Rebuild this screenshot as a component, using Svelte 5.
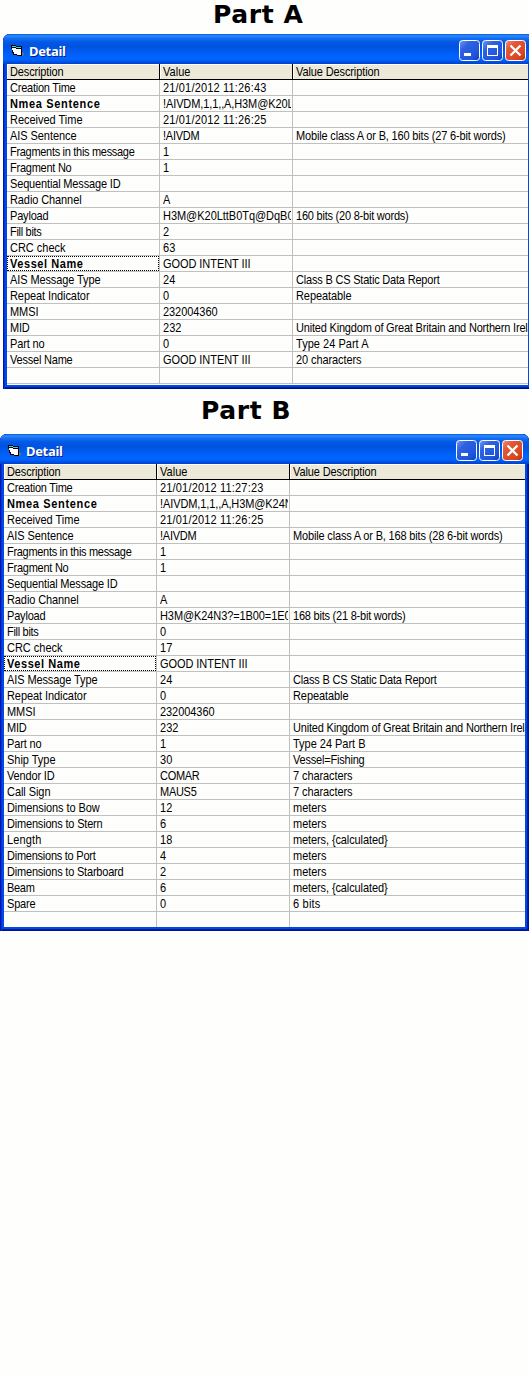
<script>
  const partA = [
    ['Creation Time', '21/01/2012 11:26:43', '', 65, 103],
    ['Nmea Sentence', '!AIVDM,1,1,,A,H3M@K20L', '', 90, 130],
    ['Received Time', '21/01/2012 11:26:25', '', 72, 103],
    ['AIS Sentence', '!AIVDM', 'Mobile class A or B, 160 bits (27 6-bit words)', 66, 36, 209],
    ['Fragments in this message', '1', '', 124, 6],
    ['Fragment No', '1', '', 61, 6],
    ['Sequential Message ID', '', '', 110],
    ['Radio Channel', 'A', '', 71, 8],
    ['Payload', 'H3M@K20LttB0Tq@DqB0', '160 bits (20 8-bit words)', 38, 130, 112],
    ['Fill bits', '2', '', 31, 6],
    ['CRC check', '63', '', 55, 12],
    ['Vessel Name', 'GOOD INTENT III', '', 73, 87],
    ['AIS Message Type', '24', 'Class B CS Static Data Report', 90, 12, 143],
    ['Repeat Indicator', '0', 'Repeatable', 79, 6, 55],
    ['MMSI', '232004360', '', 28, 54],
    ['MID', '232', 'United Kingdom of Great Britain and Northern Irela', 19, 18, 237],
    ['Part no', '0', 'Type 24 Part A', 34, 6, 72],
    ['Vessel Name', 'GOOD INTENT III', '20 characters', 62, 87, 65],
    ['', '', '']
  ];
  const partB = [
    ['Creation Time', '21/01/2012 11:27:23', '', 65, 103],
    ['Nmea Sentence', '!AIVDM,1,1,,A,H3M@K24N', '', 90, 132],
    ['Received Time', '21/01/2012 11:26:25', '', 72, 103],
    ['AIS Sentence', '!AIVDM', 'Mobile class A or B, 168 bits (28 6-bit words)', 66, 36, 209],
    ...partA.slice(4, 8),
    ['Payload', 'H3M@K24N3?=1B00=1E0', '168 bits (21 8-bit words)', 38, 130, 112],
    ['Fill bits', '0', '', 31, 6],
    ['CRC check', '17', '', 55, 12],
    ...partA.slice(11, 16),
    ['Part no', '1', 'Type 24 Part B', 34, 6, 72],
    ['Ship Type', '30', 'Vessel=Fishing', 48, 12, 71],
    ['Vendor ID', 'COMAR', '7 characters', 47, 39, 59],
    ['Call Sign', 'MAUS5', '7 characters', 43, 36, 59],
    ['Dimensions to Bow', '12', 'meters', 92, 12, 33],
    ['Dimensions to Stern', '6', 'meters', 95, 6, 33],
    ['Length', '18', 'meters, {calculated}', 34, 12, 94],
    ['Dimensions to Port', '4', 'meters', 88, 6, 33],
    ['Dimensions to Starboard', '2', 'meters', 116, 6, 33],
    ['Beam', '6', 'meters, {calculated}', 27, 6, 94],
    ['Spare', '0', '6 bits', 28, 6, 27],
    ['', '', '']
  ];
  const header = ['Description', 'Value', 'Value Description', 53, 27, 83];
  const parts = [
    { id: 'a', title: 'Part A', rows: partA },
    { id: 'b', title: 'Part B', rows: partB }
  ];

  function fit(node, width) {
    if (!width) return;
    const natural = node.getBoundingClientRect().width;
    const n = node.textContent.length;
    node.style.letterSpacing = (width + 0.5 - natural) / n + 'px';
  }
</script>

{#snippet cells(row)}
  {#each [0, 1, 2] as c}
    <div class="cell"><div class="clip"><span use:fit={row[c + 3]}>{row[c]}</span></div></div>
  {/each}
{/snippet}

<main>
  {#each parts as part}
    <h1 class={part.id}>{part.title}</h1>
    <section class="window {part.id}">
      <header class="bar">
        <svg class="app" width="14" height="14" viewBox="0 0 14 14" shape-rendering="crispEdges">
          <path d="M11 8h1v1h1v2h-1v1h-1z" fill="#6d7076" />
          <path d="M0 1h5v1h6v10H6v-1H2V9H1V5H0z" fill="#000" />
          <path d="M1 4h4v1h5v6H6v-1H3V8H2V6H1z" fill="#fff" />
          <path d="M1 2h4v1h5v1H5V3H1z" fill="#30dce0" />
        </svg>
        <span class="caption" use:fit={36}>Detail</span>
        <div class="buttons">
          <svg width="21" height="21" viewBox="0 0 21 21">
            <rect x=".5" y=".5" width="20" height="20" rx="3" fill="url(#blue)" stroke="#fff" />
            <path d="M5 13h7v3H5z" fill="#fff" />
          </svg>
          <svg width="21" height="21" viewBox="0 0 21 21">
            <rect x=".5" y=".5" width="20" height="20" rx="3" fill="url(#blue)" stroke="#fff" />
            <path d="M5 5h11v11H5zM6 8v7h9V8z" fill="#fff" fill-rule="evenodd" />
          </svg>
          <svg width="21" height="21" viewBox="0 0 21 21">
            <defs>
              <linearGradient id="blue" x1="0" y1="0" x2="1" y2="1">
                <stop offset="0" stop-color="#6f9bf5" />
                <stop offset=".3" stop-color="#2f62e2" />
                <stop offset=".75" stop-color="#1f55dc" />
                <stop offset="1" stop-color="#0c3bb8" />
              </linearGradient>
              <linearGradient id="red" x1="0" y1="0" x2="1" y2="1">
                <stop offset="0" stop-color="#f0937a" />
                <stop offset=".3" stop-color="#e0583a" />
                <stop offset=".75" stop-color="#dc4420" />
                <stop offset="1" stop-color="#b03010" />
              </linearGradient>
            </defs>
            <rect x=".5" y=".5" width="20" height="20" rx="3" fill="url(#red)" stroke="#fff" />
            <path d="M5.5 5.5l10 10M15.5 5.5l-10 10" stroke="#fff" stroke-width="2.3" />
          </svg>
        </div>
      </header>
      <div class="grid">
        <div class="row head">{@render cells(header)}</div>
        {#each part.rows as row, i}
          <div class="row" class:bold={i === 1 || i === 11} class:focus={i === 11}>{@render cells(row)}</div>
        {/each}
      </div>
    </section>
  {/each}
</main>

<style>
  :global(body) { background: #fefefc; }
  main {
    width: 529px;
    height: 1377px;
    overflow: hidden;
    background: #fefefc;
    color: #000;
    font-family: "Liberation Sans", Arial, sans-serif;
  }
  h1 {
    margin: 0;
    height: 34px;
    font: bold 25px/30px "DejaVu Sans", sans-serif;
    letter-spacing: .6px;
    white-space: nowrap;
  }
  h1.a { padding-left: 213px; }
  h1.b { height: 45px; padding-left: 201px; line-height: 44px; }
  .window { box-sizing: border-box; background: #0048e8; }
  .window.a {
    width: 526px;
    height: 355px;
    margin-left: 3px;
    padding: 0 1px 4px 4px;
    border-radius: 7px 0 0 0;
    box-shadow: inset 1px 0 #0019a8, inset 2px 0 #0831d9, inset 0 -1px #00138c, inset 0 -2px #001da0;
  }
  .window.b {
    width: 529px;
    height: 497px;
    padding: 0 4px;
    border-radius: 7px 7px 0 0;
    box-shadow: inset 1px 0 #0019a8, inset 2px 0 #0831d9, inset -1px 0 #00138c, inset -2px 0 #001da0, inset 0 -1px #00138c, inset 0 -2px #001da0;
  }
  .bar {
    display: flex;
    box-sizing: border-box;
    height: 30px;
    margin: 0 -1px 0 -4px;
    padding: 6px 3px 0 8px;
    border-radius: 7px 0 0 0;
    background: linear-gradient(#0a5be0 0, #2e8cfb 2px, #1671f3 4px, #0458e6 8px, #0053e0 13px, #0060fa 20px, #0066ff 25px, #0059ee 27px, #0040cc 30px);
  }
  .b .bar { margin: 0 -4px; padding-right: 6px; border-radius: 7px 7px 0 0; }
  .app { margin-top: 4px; }
  .caption {
    align-self: flex-start;
    margin-left: 4px;
    font: bold 13px/22px "Noto Sans", sans-serif;
    color: #fff;
    text-shadow: 1px 1px #0a1f8c;
  }
  .buttons { display: flex; gap: 2px; margin-left: auto; }
  .grid { background: #fefefc; overflow: hidden; }
  .a .grid { height: 321px; }
  .b .grid { height: 463px; }
  .row {
    display: grid;
    grid-template-columns: 153px 133px 1fr;
    height: 16px;
    font-size: 11px;
    line-height: 16px;
  }
  .cell {
    box-sizing: border-box;
    min-width: 0;
    height: 16px;
    padding: 0 1px 0 3px;
    border-right: 1px solid #c0c0c0;
    border-bottom: 1px solid #c0c0c0;
  }
  .cell:last-child { border-right: 0; padding-right: 0; }
  .clip { overflow: hidden; height: 15px; white-space: nowrap; }
  .clip span { display: inline-block; transform: scaleY(1.12); transform-origin: 0 12px; }
  .head .cell { background: #ece9d8; border-color: #000; box-shadow: inset 1px 1px #fff; }
  .bold .cell:first-child { font-weight: bold; }
  .focus .cell:first-child .clip {
    margin: 0 -1px 0 -3px;
    padding-left: 3px;
    outline: 1px dotted #000;
    outline-offset: -1px;
  }
</style>
